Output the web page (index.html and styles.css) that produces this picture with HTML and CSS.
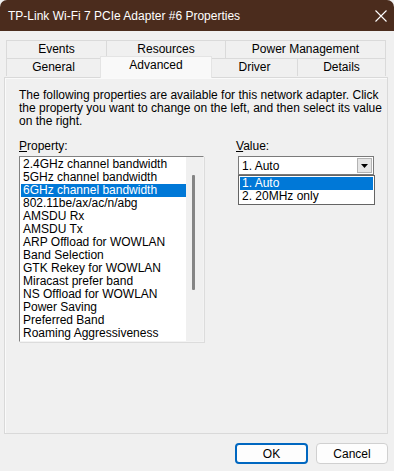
FILE: index.html
```html
<!DOCTYPE html>
<html lang="en">
<head>
    <meta charset="UTF-8">
    <title>TP-Link Wi-Fi 7 PCIe Adapter #6 Properties</title>
    <link rel="stylesheet" href="styles.css">
</head>
<body>
    <div class="titlebar">
        <span class="title">TP-Link Wi-Fi 7 PCIe Adapter #6 Properties</span>
        <svg class="close" width="14" height="14" viewBox="0 0 14 14">
            <path d="M1.5 1.5 L12.5 12.5 M12.5 1.5 L1.5 12.5" stroke="#fff" stroke-width="1.1" fill="none"/>
        </svg>
    </div>

    <div class="tabs">
        <div class="tab-row back">
            <div class="tab w-events">Events</div>
            <div class="tab w-resources">Resources</div>
            <div class="tab w-power">Power Management</div>
        </div>
        <div class="tab-row front">
            <div class="tab w-general">General</div>
            <div class="tab w-advanced active">Advanced</div>
            <div class="tab w-driver">Driver</div>
            <div class="tab w-details">Details</div>
        </div>
    </div>

    <div class="panel">
        <p class="intro">The following properties are available for this network adapter. Click the property you want to change on the left, and then select its value on the right.</p>

        <div class="columns">
            <div class="col-left">
                <div class="label"><u>P</u>roperty:</div>
                <div class="listbox">
                    <ul class="items">
                        <li>2.4GHz channel bandwidth</li>
                        <li>5GHz channel bandwidth</li>
                        <li class="sel">6GHz channel bandwidth</li>
                        <li>802.11be/ax/ac/n/abg</li>
                        <li>AMSDU Rx</li>
                        <li>AMSDU Tx</li>
                        <li>ARP Offload for WOWLAN</li>
                        <li>Band Selection</li>
                        <li>GTK Rekey for WOWLAN</li>
                        <li>Miracast prefer band</li>
                        <li>NS Offload for WOWLAN</li>
                        <li>Power Saving</li>
                        <li>Preferred Band</li>
                        <li>Roaming Aggressiveness</li>
                    </ul>
                    <div class="scroll"><div class="thumb"></div></div>
                </div>
            </div>

            <div class="col-right">
                <div class="label"><u>V</u>alue:</div>
                <div class="combo">
                    <span class="combo-text">1. Auto</span>
                    <span class="combo-btn">
                        <svg width="7" height="4" viewBox="0 0 7 4"><path d="M0 0 H7 L3.5 4 Z" fill="#000"/></svg>
                    </span>
                </div>
                <ul class="dropdown">
                    <li class="sel">1. Auto</li>
                    <li>2. 20MHz only</li>
                </ul>
            </div>
        </div>
    </div>

    <div class="buttons">
        <button class="btn default">OK</button>
        <button class="btn">Cancel</button>
    </div>
</body>
</html>
```

FILE: styles.css
```css
body {
    margin: 0;
    width: 394px;
    height: 471px;
    overflow: hidden;
    background-color: #f0f0f0;
    font-family: "Liberation Sans", Arial, sans-serif;
    font-size: 12px;
    color: #000;
}

/* Barre de titre */
.titlebar {
    height: 31px;
    background-color: #4b2c1d;
    border-radius: 7px 7px 0 0;
    display: flex;
    align-items: center;
    justify-content: space-between;
    padding: 0 6px 0 8px;
    color: #fff;
}

.title {
    font-size: 12px;
}

.close {
    margin-top: 1px;
}

/* Onglets */
.tabs {
    padding: 9px 0 0 6px;
    width: 379px;
}

.tab-row {
    display: flex;
    height: 18px;
}

.tab {
    box-sizing: border-box;
    height: 18px;
    line-height: 17px;
    text-align: center;
    background-color: #f0f0f0;
    border: 1px solid #dadada;
    border-bottom: none;
    margin-right: -1px;
}

.w-events { width: 101px; }
.w-resources { width: 120px; }
.w-power { width: 161px; }
.w-general { width: 95px; }
.w-advanced { width: 112px; }
.w-driver { width: 87px; }
.w-details { width: 89px; }

.tab.active {
    position: relative;
    z-index: 2;
    height: 22px;
    margin-top: -2px;
    line-height: 17px;
    background-color: #f9f9f9;
    border-color: #e4e4e4;
}

/* Panneau */
.panel {
    box-sizing: border-box;
    margin: 1px 6px 0 4px;
    height: 357px;
    border: 1px solid #d9d9d9;
    box-shadow: inset 1px 1px 0 #fafafa;
    padding: 11px 0 0 14px;
}

.intro {
    margin: 0;
    width: 366px;
    line-height: 13px;
}

.columns {
    display: flex;
    margin-top: 12px;
}

.label {
    height: 14px;
    line-height: 13px;
    margin-bottom: 2px;
}

.label u {
    text-decoration-thickness: 1px;
    text-underline-offset: 1px;
}

.col-left {
    width: 185px;
}

.col-right {
    margin-left: 34px;
    width: 138px;
}

.col-right .label {
    margin-left: -2px;
}

/* Liste des propriétés */
.listbox {
    box-sizing: border-box;
    height: 186px;
    background-color: #fff;
    border: 1px solid;
    border-color: #828282 #f3f3f3 #f3f3f3 #828282;
    box-shadow: 1px 1px 0 #dcdcdc;
    display: flex;
}

.items {
    list-style: none;
    margin: 1px 0 0 1px;
    padding: 0;
    flex: 1;
}

.items li {
    height: 13px;
    line-height: 13px;
    padding-left: 2px;
    white-space: nowrap;
}

.sel {
    background-color: #0078d7;
    color: #fff;
}

.scroll {
    width: 17px;
    background-color: #f0f0f0;
    padding-top: 18px;
}

.thumb {
    width: 3px;
    height: 115px;
    margin-left: 6px;
    background-color: #858585;
    border-radius: 1px;
}

/* Liste déroulante */
.combo {
    box-sizing: border-box;
    height: 19px;
    width: 136px;
    background-color: #fff;
    border: 1px solid #7a7a7a;
    display: flex;
    align-items: center;
    justify-content: space-between;
    padding: 0 1px 0 3px;
}

.combo-btn {
    box-sizing: border-box;
    width: 15px;
    height: 15px;
    background-color: #e5e5e5;
    border: 1px solid #b3b3b3;
    display: flex;
    align-items: center;
    justify-content: center;
}

.dropdown {
    box-sizing: border-box;
    list-style: none;
    margin: 0;
    padding: 1px;
    width: 137px;
    background-color: #fff;
    border: 1px solid #646464;
}

.dropdown li {
    height: 13px;
    line-height: 13px;
    padding-left: 2px;
}

/* Boutons */
.buttons {
    display: flex;
    justify-content: flex-end;
    gap: 8px;
    padding: 9px 6px 0 0;
}

.btn {
    box-sizing: border-box;
    width: 72px;
    height: 21px;
    font-family: "Liberation Sans", Arial, sans-serif;
    font-size: 12px;
    color: #000;
    background-color: #fdfdfd;
    border: 1px solid #d0d0d0;
    border-radius: 4px;
    padding: 0;
}

.btn.default {
    width: 73px;
    border: 2px solid #0067c0;
}
```
